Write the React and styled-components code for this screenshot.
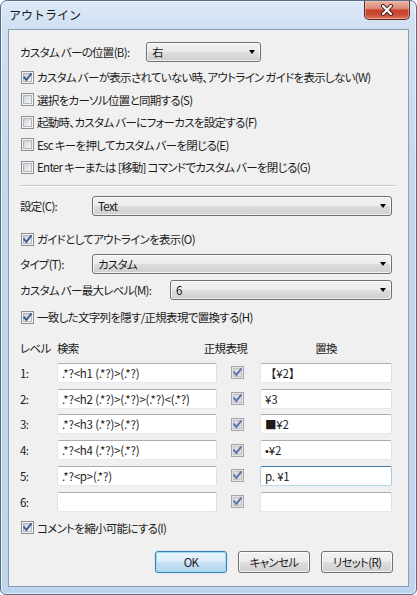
import React from "react";
import styled, { createGlobalStyle, css } from "styled-components";

const Global = createGlobalStyle`
  html, body { margin: 0; padding: 0; background: #ffffff; }
  body { font-family: "Noto Sans CJK JP", "Noto Sans", sans-serif; font-size: 12px; color: #1b1b1b; }
  * { box-sizing: border-box; }
`;

const Window = styled.div`
  width: 417px;
  height: 595px;
  border: 1px solid #5b6d84;
  border-radius: 7px 7px 6px 6px;
  background: linear-gradient(180deg, #dde9f6 0px, #cfe0f2 28px, #c3d8ee 200px, #bfd5ed 100%);
  box-shadow: inset 0 0 0 1px rgba(255, 255, 255, 0.55);
  display: flex;
  flex-direction: column;
  padding: 0 7px 7px 7px;
  overflow: hidden;
`;

const TitleBar = styled.div`
  flex: none;
  height: 28px;
  display: flex;
  align-items: flex-start;
  justify-content: space-between;
  margin-right: -1px;
`;

const Title = styled.div`
  padding-top: 5px;
  padding-left: 1px;
  font-size: 12px;
  color: #1a1a1a;
`;

const CloseBtn = styled.div`
  width: 46px;
  height: 19px;
  border: 1px solid #5f2a24;
  border-top: none;
  border-radius: 0 0 5px 5px;
  background: linear-gradient(180deg, #ebb1a4 0%, #dd8c7c 40%, #c8442f 52%, #c94a34 75%, #dc7a5e 100%);
  box-shadow: inset 0 0 0 1px rgba(255, 210, 200, 0.45);
  display: flex;
  align-items: center;
  justify-content: center;
`;

const Client = styled.div`
  flex: 1;
  min-height: 0;
  border: 1px solid #8a9db5;
  background: #f0f0f0;
  padding: 12px 16px 0 11px;
  display: flex;
  flex-direction: column;
  font-size: 11.5px;
  letter-spacing: -0.7px;
  font-feature-settings: "palt";
`;

const FieldRow = styled.div`
  flex: none;
  display: flex;
  align-items: center;
  height: 20px;
  margin-top: ${(p) => p.$mt || 0}px;
`;

const Label = styled.div`
  width: ${(p) => p.$w}px;
  flex: none;
  white-space: nowrap;
`;

const Select = styled.div`
  position: relative;
  height: 20px;
  width: ${(p) => (p.$w ? `${p.$w}px` : "auto")};
  flex: ${(p) => (p.$w ? "none" : 1)};
  border: 1px solid #707070;
  border-radius: 3px;
  background: linear-gradient(180deg, #f2f2f2 0%, #ebebeb 49%, #dddddd 51%, #cfcfcf 100%);
  box-shadow: inset 0 0 0 1px rgba(255, 255, 255, 0.7);
  display: flex;
  align-items: center;
  padding-left: 5px;
  white-space: nowrap;
`;

const Arrow = styled.span`
  position: absolute;
  right: 5px;
  top: 7px;
  width: 0;
  height: 0;
  border-left: 3.5px solid transparent;
  border-right: 3.5px solid transparent;
  border-top: 4px solid #000;
`;

const CheckList = styled.div`
  flex: none;
  display: flex;
  flex-direction: column;
  margin-top: ${(p) => p.$mt || 0}px;
`;

const CheckRow = styled.label`
  flex: none;
  display: flex;
  align-items: center;
  height: ${(p) => p.$h || 22}px;
  margin-top: ${(p) => p.$mt || 0}px;
  padding-left: 1px;
  gap: 3px;
  white-space: nowrap;
`;

const BoxOuter = styled.span`
  width: 13px;
  height: 13px;
  flex: none;
  display: inline-block;
  position: relative;
  border: 1px solid ${(p) => (p.$disabled ? "#a7a7a7" : "#8e8f8f")};
  background: ${(p) => (p.$disabled ? "#e4e4e4" : "#f5f5f5")};
`;

const BoxInner = styled.span`
  position: absolute;
  left: 1px;
  top: 1px;
  width: 9px;
  height: 9px;
  ${(p) =>
    p.$disabled
      ? css`
          background: #dcdcdc;
          border: 1px solid #c4c4c4;
        `
      : css`
          background: linear-gradient(135deg, #cbcfd5 0%, #e5e8ec 55%, #f7f7f7 100%);
          border: 1px solid #b1b6bd;
        `}
`;

const CheckSvg = styled.svg`
  position: absolute;
  left: 0;
  top: 0;
`;

function Checkbox({ checked, disabled }) {
  return (
    <BoxOuter $disabled={disabled}>
      <BoxInner $disabled={disabled} />
      {checked && (
        <CheckSvg width="11" height="11" viewBox="0 0 11 11">
          <path
            d="M2.2 5.4 L4.4 7.9 L8.9 2.2"
            fill="none"
            stroke={disabled ? "#5b74ad" : "#3f5a98"}
            strokeWidth="1.9"
            strokeLinecap="square"
          />
        </CheckSvg>
      )}
    </BoxOuter>
  );
}

const Separator = styled.div`
  flex: none;
  margin-top: 6px;
  margin-right: -3px;
  height: 2px;
  border-top: 1px solid #c8c8c8;
  border-bottom: 1px solid #ffffff;
`;

const Table = styled.div`
  flex: none;
  display: grid;
  grid-template-columns: 37px 160px 43px 132px;
  grid-template-rows: 20px repeat(6, 20px);
  row-gap: 5.8px;
  align-items: center;
  margin-top: ${(p) => p.$mt || 0}px;
`;

const HeadRow = styled.div`
  grid-column: 1 / -1;
  display: grid;
  grid-template-columns: 37px 160px 43px 132px;
  align-items: center;
  margin-bottom: -2px;
`;

const HeadCell = styled.div`
  white-space: nowrap;
  ${(p) =>
    p.$regex &&
    css`
      justify-self: end;
      margin-right: 13px;
    `}
  ${(p) =>
    p.$center &&
    css`
      justify-self: center;
    `}
`;

const RowNum = styled.div``;

const TextBox = styled.div`
  height: 20px;
  border: 1px solid;
  border-color: ${(p) => (p.$hot ? "#3d7bad #a4c9e3 #b7d9ed #b5cfe7" : "#abadb3 #dbdfe6 #e3e9ef #e2e3ea")};
  border-radius: 2px;
  background: #ffffff;
  display: flex;
  align-items: center;
  padding-left: 4px;
  white-space: nowrap;
  overflow: hidden;
  font-size: 11.5px;
  letter-spacing: -0.2px;
  font-feature-settings: normal;
`;

const CellCheck = styled.div`
  padding-left: 14px;
  display: flex;
  align-items: center;
`;

const ButtonBar = styled.div`
  flex: none;
  display: flex;
  justify-content: flex-end;
  gap: 11px;
  margin-top: 12px;
  margin-right: -1px;
`;

const Button = styled.div`
  width: 72px;
  height: 22px;
  border: 1px solid ${(p) => (p.$default ? "#3c7fb1" : "#707070")};
  border-radius: 3px;
  background: ${(p) =>
    p.$default
      ? "linear-gradient(180deg, #eaf5fc 0%, #dcedf9 49%, #c6e2f5 51%, #b4d6ef 100%)"
      : "linear-gradient(180deg, #f2f2f2 0%, #ebebeb 49%, #dddddd 51%, #cfcfcf 100%)"};
  box-shadow: ${(p) =>
    p.$default
      ? "inset 0 0 0 1px #9fdcf7, 0 0 2px rgba(60,160,230,0.35)"
      : "inset 0 0 0 1px rgba(255,255,255,0.75)"};
  display: flex;
  align-items: center;
  justify-content: center;
  white-space: nowrap;
`;

const topChecks = [
  { t: "カスタム バーが表示されていない時、アウトライン ガイドを表示しない(W)", c: true },
  { t: "選択をカーソル位置と同期する(S)", c: false },
  { t: "起動時、カスタム バーにフォーカスを設定する(F)", c: false },
  { t: "Esc キーを押してカスタム バーを閉じる(E)", c: false },
  { t: "Enter キーまたは [移動] コマンドでカスタム バーを閉じる(G)", c: false },
];

const rows = [
  { s: ".*?<h1 (.*?)>(.*?)", r: "【¥2】" },
  { s: ".*?<h2 (.*?)>(.*?)>(.*?)<(.*?)", r: "¥3" },
  { s: ".*?<h3 (.*?)>(.*?)", r: "■¥2" },
  { s: ".*?<h4 (.*?)>(.*?)", r: "•¥2" },
  { s: ".*?<p>(.*?)", r: "p. ¥1", hot: true },
  { s: "", r: "" },
];

export default function App() {
  return (
    <>
      <Global />
      <Window>
        <TitleBar>
          <Title>アウトライン</Title>
          <CloseBtn>
            <svg width="14" height="12" viewBox="0 0 14 12">
              <path d="M3 2 L11 10 M11 2 L3 10" stroke="#4a1f1a" strokeWidth="4" strokeLinecap="round" />
              <path d="M3 2 L11 10 M11 2 L3 10" stroke="#ffffff" strokeWidth="2.2" strokeLinecap="round" />
            </svg>
          </CloseBtn>
        </TitleBar>
        <Client>
          <FieldRow>
            <Label $w={126}>カスタム バーの位置(B):</Label>
            <Select $w={115}>
              右<Arrow />
            </Select>
          </FieldRow>
          <CheckList $mt={4}>
            {topChecks.map((c, i) => (
              <CheckRow key={i} $h={22.5}>
                <Checkbox checked={c.c} />
                <span>{c.t}</span>
              </CheckRow>
            ))}
          </CheckList>
          <Separator />
          <FieldRow $mt={9.5}>
            <Label $w={72}>設定(C):</Label>
            <Select>
              Text<Arrow />
            </Select>
          </FieldRow>
          <CheckRow $mt={12}>
            <Checkbox checked />
            <span>ガイドとしてアウトラインを表示(O)</span>
          </CheckRow>
          <FieldRow $mt={4}>
            <Label $w={72}>タイプ(T):</Label>
            <Select>
              カスタム<Arrow />
            </Select>
          </FieldRow>
          <FieldRow $mt={6}>
            <Label $w={150}>カスタム バー最大レベル(M):</Label>
            <Select>
              6<Arrow />
            </Select>
          </FieldRow>
          <CheckRow $mt={6}>
            <Checkbox checked />
            <span>一致した文字列を隠す/正規表現で置換する(H)</span>
          </CheckRow>
          <Table $mt={9}>
            <HeadRow>
              <HeadCell>レベル</HeadCell>
              <HeadCell>検索</HeadCell>
              <HeadCell $regex>正規表現</HeadCell>
              <HeadCell $center>置換</HeadCell>
            </HeadRow>
            {rows.map((r, i) => (
              <React.Fragment key={i}>
                <RowNum>{i + 1}:</RowNum>
                <TextBox>{r.s}</TextBox>
                <CellCheck>
                  <Checkbox checked disabled />
                </CellCheck>
                <TextBox $hot={r.hot}>{r.r}</TextBox>
              </React.Fragment>
            ))}
          </Table>
          <CheckRow $mt={5}>
            <Checkbox checked />
            <span>コメントを縮小可能にする(I)</span>
          </CheckRow>
          <ButtonBar>
            <Button $default>OK</Button>
            <Button>キャンセル</Button>
            <Button>リセット(R)</Button>
          </ButtonBar>
        </Client>
      </Window>
    </>
  );
}
